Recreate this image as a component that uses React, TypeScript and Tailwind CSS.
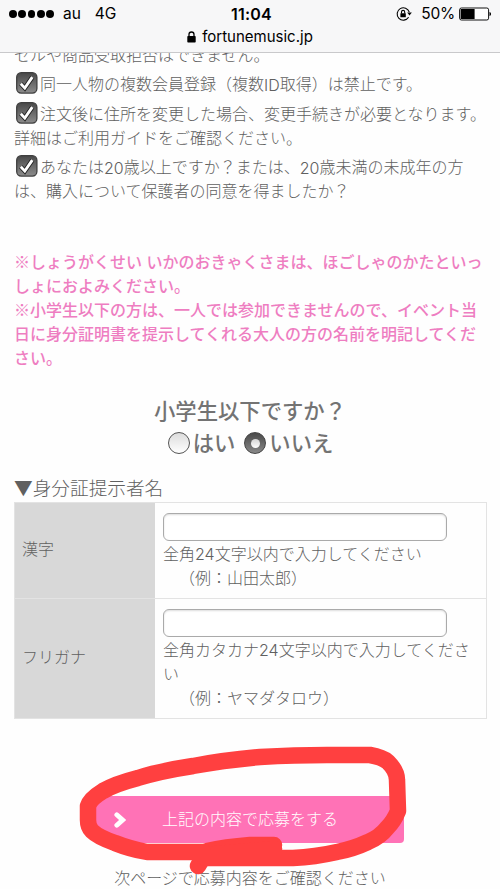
import { clsx } from 'clsx'
import type { ReactNode } from 'react'

const fields = [
  { label: '漢字', height: 'h-[95px]', before: '全角', after: '文字以内で入力してください', rest: ['　（例：山田太郎）'] },
  { label: 'フリガナ', height: 'h-[120px]', before: '全角カタカナ', after: '文字以内で入力してくださ', rest: ['い', '　（例：ヤマダタロウ）'] },
]

function StatusBar() {
  return (
    <header className="relative z-10 h-[53px] border-b border-[#c9c9cb] bg-[#f7f7f8] font-['Inter','Liberation_Sans',sans-serif] font-normal text-black">
      <div className="grid h-[28px] grid-cols-[1fr_auto_1fr] items-center pl-[9px] pr-[8px] text-[15.5px]">
        <div className="flex items-center">
          <div className="flex gap-[1.5px]">
            {[0, 1, 2, 3, 4].map((n) => (
              <span key={n} className="size-[7.8px] rounded-full bg-black" />
            ))}
          </div>
          <span className="ml-[9px]">au</span>
          <span className="ml-[14px]">4G</span>
        </div>
        <span className="ml-[2px] text-base font-semibold tracking-[0.2px]">11:04</span>
        <div className="flex items-center justify-end">
          <svg viewBox="0 0 16 16" className="size-4" fill="none" stroke="#000" strokeWidth="1.1">
            <path d="M12.6 11.3A6.2 6.2 0 1 1 13.3 6.2" />
            <path d="M11.2 6.4h4.6l-2.3 3z" fill="#000" stroke="none" />
            <rect x="4.4" y="7.2" width="5.4" height="4" rx="0.5" fill="#000" stroke="none" />
            <path d="M5.5 7.5V6a1.6 1.6 0 0 1 3.2 0v1.5" />
          </svg>
          <span className="ml-[9px] tracking-[-0.2px]">50%</span>
          <svg viewBox="0 0 33 14" className="ml-[4px] h-[14px] w-[33px]">
            <rect x="0.6" y="1" width="29" height="12" rx="1.8" fill="#fff" stroke="#111" strokeWidth="1" />
            <rect x="1.6" y="2" width="14" height="10" fill="#000" />
            <path d="M30.5 5c2 .5 2 3.5 0 4z" fill="#000" />
          </svg>
        </div>
      </div>
      <div className="flex h-[18px] items-center justify-center gap-[6px] text-[15px]">
        <svg viewBox="0 0 9 12" className="h-3 w-[9px]">
          <rect x="0.3" y="5" width="8.4" height="6.5" rx="0.8" />
          <path d="M2 5.5V3.5a2.5 2.5 0 0 1 5 0v2" fill="none" stroke="#000" strokeWidth="1.3" />
        </svg>
        <span>fortunemusic.jp</span>
      </div>
    </header>
  )
}

function Num({ children }: { children: ReactNode }) {
  return <span className="font-['Inter',sans-serif] font-light leading-none">{children}</span>
}

function Check() {
  return (
    <svg viewBox="0 0 22 22" className="-mt-[5px] ml-[2px] mr-[2px] size-[22px] shrink-0">
      <defs>
        <linearGradient id="check" x1="0" y1="0" x2="0" y2="1">
          <stop offset="0" stopColor="#484848" />
          <stop offset="1" stopColor="#8c8c8c" />
        </linearGradient>
      </defs>
      <rect x="0.7" y="0.7" width="20.2" height="20.4" rx="4.5" fill="url(#check)" stroke="#3f3f3f" strokeWidth="1.3" />
      <path d="M4.800 11.800l4 4.300 7.500-11" fill="none" stroke="#222" strokeWidth="4.600" />
      <path d="M4.800 11.800l4 4.300 7.500-11" fill="none" stroke="#fff" strokeWidth="2.800" />
    </svg>
  )
}

function Radio({ checked = false }: { checked?: boolean }) {
  return (
    <span
      className={clsx(
        '-mt-[2px] ml-px grid size-[22px] place-items-center rounded-full border',
        checked ? 'border-[#444] bg-linear-to-b from-[#494949] to-[#898989]' : 'border-[#555] bg-linear-to-b from-[#dcdcdc] to-white',
      )}
    >
      {checked && <span className="size-[9px] rounded-full bg-linear-to-b from-[#d5d5d5] to-white" />}
    </span>
  )
}

export default function App() {
  return (
    <div className="relative h-[889px] w-[500px] overflow-hidden bg-[#fefefe] font-['Liberation_Sans','Noto_Sans_CJK_JP',sans-serif] text-base font-light leading-6 text-[#606060] [text-spacing-trim:space-all]">
      <StatusBar />
      <main lang="ja" className="-mt-[9px] whitespace-nowrap px-[14px]">
        <p>セルや商品受取拒否はできません。</p>
        <p className="mt-[5px] flex h-6 items-center"><Check />同一人物の複数会員登録（複数<Num>ID</Num>取得）は禁止です。</p>
        <p className="mt-[6px] flex h-6 items-center"><Check />注文後に住所を変更した場合、変更手続きが必要となります。</p>
        <p>詳細はご利用ガイドをご確認ください。</p>
        <p className="mt-[5px] flex h-6 items-center"><Check />あなたは<Num>20</Num>歳以上ですか？または、<Num>20</Num>歳未満の未成年の方</p>
        <p>は、購入について保護者の同意を得ましたか？</p>

        <div className="mt-[47px] font-medium text-[#ee7dc1]">
          <p>※しょうがくせい いかのおきゃくさまは、ほごしゃのかたといっ</p>
          <p>しょにおよみください。</p>
          <p>※小学生以下の方は、一人では参加できませんので、イベント当</p>
          <p>日に身分証明書を提示してくれる大人の方の名前を明記してくだ</p>
          <p>さい。</p>
        </div>

        <div className="mt-[25px] text-center text-[21.33px] font-medium leading-8 text-[#737373]">
          <p>小学生以下ですか？</p>
          <div className="flex h-8 items-center justify-center">
            <Radio />
            <span className="ml-[3px] mr-[8px]">はい</span>
            <Radio checked />
            <span className="ml-[3px]">いいえ</span>
          </div>
        </div>

        <h2 className="mt-[17px] h-6 text-[18.66px] leading-6">
          <span className="font-['Noto_Sans_CJK_JP',sans-serif] leading-none">▼</span>身分証提示者名
        </h2>
        <div className="mt-[1px] w-[473px] border border-[#e3e3e3]">
          {fields.map((f, i) => (
            <div key={f.label} className={clsx('flex', f.height, i > 0 && 'border-t border-[#e3e3e3]')}>
              <div className="flex w-[140px] shrink-0 items-center bg-[#d8d8d8] pb-[2px] pl-[7px]">{f.label}</div>
              <div className="pl-[8px] pt-[10px]">
                <div className="mb-[2px] h-[28px] w-[284px] rounded-[6px] border border-[#aaa] bg-white shadow-[inset_0_1px_2px_#ddd]" />
                <p className="h-6">{f.before}<Num>24</Num>{f.after}</p>
                {f.rest.map((h) => (
                  <p key={h}>{h}</p>
                ))}
              </div>
            </div>
          ))}
        </div>

        <button className="mx-auto mt-[77px] flex h-[47px] w-[308px] items-center rounded-[4px] bg-[#ff72b6] text-white">
          <svg viewBox="0 0 12 16" className="ml-[18px] h-4 w-3">
            <path d="M2.800 2.800l5.800 5.200-5.800 5.200" fill="none" stroke="#fff" strokeWidth="4.800" strokeLinecap="round" />
          </svg>
          <span className="ml-[36px]">上記の内容で応募をする</span>
        </button>
        <p className="mt-[24px] text-center">次ページで応募内容をご確認ください</p>
      </main>

      {/* hand-drawn marker around the submit button */}
      <svg viewBox="70 740 350 149" className="pointer-events-none absolute left-[70px] top-[740px] h-[149px] w-[350px]" fill="none" stroke="#ff4040" strokeWidth="16.5" strokeLinecap="round" strokeLinejoin="round">
        <path d="M274 845L250 845Q225 847 207 851L198 866" />
        <path d="M274 849L207 855" />
        <path d="M203 852L147 852Q130 849 115 843Q98 837 92 831Q88 827 88 820L88 806Q90 799 103 791Q115 784 138 778Q160 771 193 766Q225 760 260 757Q295 755 327 755L370 755Q382 757 388 762Q397 771 397 780L398 811Q394 821 387 828Q380 837 368 842Q353 849 337 852Q315 857 293 858L205 858" />
      </svg>
    </div>
  )
}
